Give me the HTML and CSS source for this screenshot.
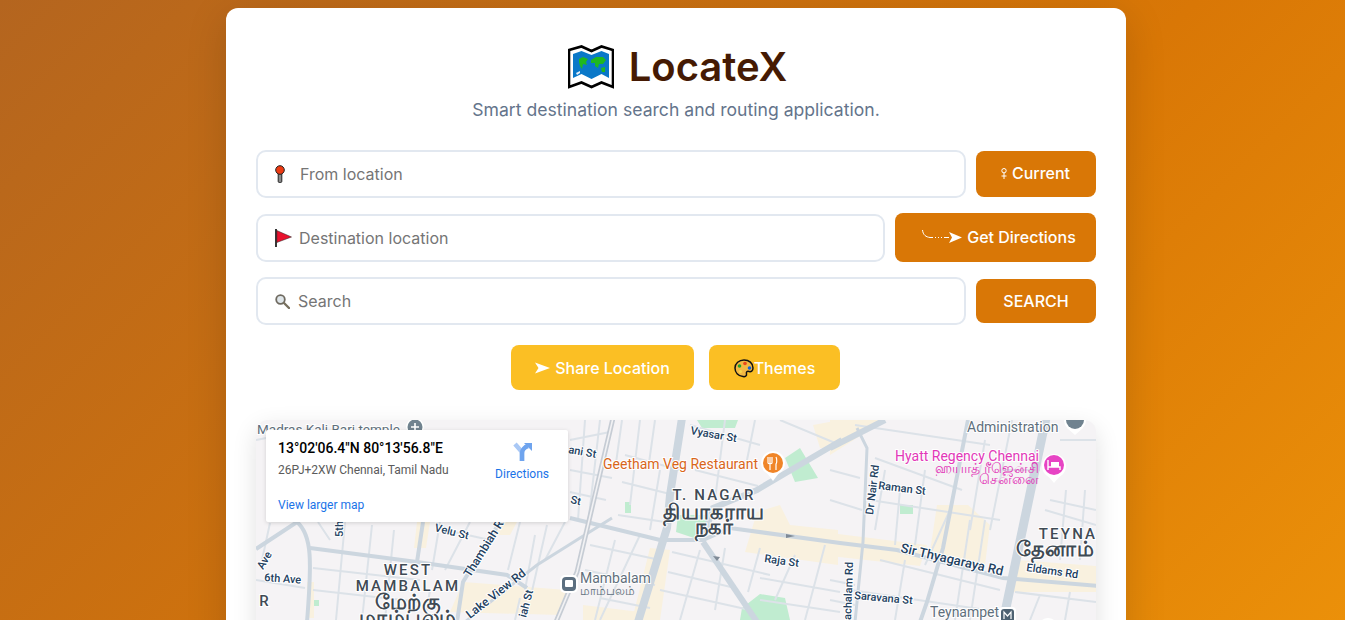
FILE: index.html
```html
<!DOCTYPE html>
<html lang="en">
<head>
    <meta charset="UTF-8">
    <meta name="viewport" content="width=device-width, initial-scale=1.0">
    <title>LocateX</title>
    <link rel="stylesheet" href="styles.css">
</head>
<body>
    <div class="container">
        <header class="header">
            <h1 class="title">
                <svg class="logo" viewBox="0 0 46 44" width="46" height="44">
                    <path d="M1 5 L13.5 1.5 L23.5 6 L33.5 1.5 L45 5 V42 L33.5 37.5 L23.5 42 L13.5 37.5 L1 42 Z" fill="#fff" stroke="#000" stroke-width="2.6"/>
                    <path d="M5 9 L13.5 6 L23.5 10 L33.5 6 L41 9 V33 L33.5 29 L23.5 34 L13.5 29 L5 33 Z" fill="#0a78c8"/>
                    <path d="M11 14 L15 12 L20 14 L18 17 L19 20 L15 19 L14 24 L12 21 L11 17 Z" fill="#1fb81f"/>
                    <path d="M23 15 L28 12 L35 12 L38 15 L35 19 L31 19 L30 23 L27 21 L27 18 L23 18 Z" fill="#1fb81f"/>
                    <path d="M33 23 L37 22 L37 27 L34 27 Z" fill="#1fb81f"/>
                    <path d="M8 28 L12 26 L12 28 L9 30 Z" fill="#e8f0f8"/>
                </svg>
                <span>LocateX</span>
            </h1>
            <p class="subtitle">Smart destination search and routing application.</p>
        </header>

        <div class="row">
            <label class="field">
                <svg class="field-icon" viewBox="0 0 12 18" width="12" height="18">
                    <rect x="4.2" y="6" width="3.6" height="11.4" rx="1" fill="#8a8a8a" stroke="#222"/>
                    <circle cx="6" cy="5" r="4.3" fill="#ee3a12" stroke="#222"/>
                </svg>
                <input class="field-input" type="text" placeholder="From location">
            </label>
            <button class="btn btn-small btn-current">
                <svg viewBox="0 0 8 11" width="8" height="11">
                    <circle cx="4" cy="2.7" r="2.2" fill="none" stroke="#fff"/>
                    <path d="M4 5 V11 M1.5 8 H6.5" stroke="#fff" fill="none"/>
                </svg>
                Current
            </button>
        </div>

        <div class="row">
            <label class="field field-flag">
                <svg class="field-icon" viewBox="0 0 18 18" width="18" height="18">
                    <path d="M2 0 V18" stroke="#222" stroke-width="1.8"/>
                    <path d="M2.8 1.5 L17.5 8 L2.8 13.5 Z" fill="#e8112d" stroke="#222" stroke-width=".5"/>
                </svg>
                <input class="field-input" type="text" placeholder="Destination location">
            </label>
            <button class="btn btn-wide">
                <svg viewBox="0 0 40 14" width="40" height="14">
                    <path d="M.5 0 C1 5 4 7 8 7.5 H27" fill="none" stroke="#fff"/>
                    <path d="M10 7.5 h2 m1 0 h2 m1 0 h2 m1 0 h2" stroke="#d97706" stroke-width="1.2" fill="none" transform="translate(1 0)"/>
                    <path d="M27 2 L40 7.5 L27 13 L30 7.5 Z" fill="#fff"/>
                </svg>
                Get Directions
            </button>
        </div>

        <div class="row">
            <label class="field field-search">
                <svg class="field-icon" viewBox="0 0 16 16" width="16" height="16">
                    <circle cx="6.5" cy="6.5" r="4.3" fill="#dfe6ea" stroke="#6f6a60" stroke-width="1.8"/>
                    <path d="M10 10 L15 15" stroke="#77705f" stroke-width="2.4" stroke-linecap="round"/>
                </svg>
                <input class="field-input" type="text" placeholder="Search">
            </label>
            <button class="btn btn-small btn-search">SEARCH</button>
        </div>

        <div class="actions">
            <button class="btn-alt btn-share">
                <svg viewBox="0 0 15 12" width="15" height="12">
                    <path d="M0 .5 L15 6 L0 11.5 L3.5 6 Z" fill="#fff"/>
                </svg>
                Share Location
            </button>
            <button class="btn-alt btn-themes">
                <svg class="palette" viewBox="0 0 20 20" width="20" height="20">
                    <path d="M10 2 C15 2 19 5 19 10 C19 13 17 14 15 13.5 C13 13 12 14 12.5 16 C13 18 11 19 9 18.5 C4 18 1 14.5 1 10 C1 5.5 5 2 10 2 Z" fill="#f3b843" stroke="#111" stroke-width="1.5"/>
                    <circle cx="5.5" cy="8" r="1.8" fill="#22a32a"/>
                    <circle cx="11" cy="5.5" r="1.8" fill="#e8471c"/>
                    <circle cx="15.5" cy="10" r="1.8" fill="#1463d8"/>
                    <circle cx="6.5" cy="13.5" r="1.6" fill="#f7d74a"/>
                </svg>Themes
            </button>
        </div>

        <div class="map">
            <svg class="map-canvas" viewBox="256 420 840 200" width="840" height="200">
                <!-- built up areas -->
                <g fill="#f9f1df">
                    <path d="M417 522 L430 522 L426 548 L414 548 Z"/>
                    <path d="M497 522 L517 522 L510 535 L490 535 Z"/>
                    <path d="M463 582 L567 590 L560 615 L450 612 Z"/>
                    <path d="M307 582 L314 582 L314 618 L307 618 Z"/>
                    <path d="M650 548 L670 550 L660 620 L632 620 Z"/>
                    <path d="M757 512 L780 505 L790 525 L838 530 L838 565 L745 552 Z"/>
                    <path d="M583 605 L640 612 L636 620 L583 620 Z"/>
                    <path d="M813 425 L840 420 L840 448 L820 448 Z"/>
                    <path d="M830 420 L885 420 L860 436 L830 455 Z"/>
                    <path d="M830 533 L927 545 L920 566 L830 556 Z"/>
                    <path d="M937 505 L968 505 L990 525 L985 565 L930 552 Z"/>
                    <path d="M1017 560 L1096 566 L1096 592 L1008 592 Z"/>
                </g>
                <!-- parks -->
                <g fill="#c0ecd0">
                    <path d="M697 420 L738 420 L735 428 L702 428 Z"/>
                    <path d="M785 458 L800 448 L818 478 L795 482 Z"/>
                    <path d="M678 515 L706 515 L712 530 L700 540 L676 532 Z"/>
                    <rect x="625" y="502" width="6" height="11"/>
                    <path d="M742 608 L760 594 L785 598 L790 620 L740 620 Z"/>
                    <rect x="900" y="505" width="13" height="9"/>
                    <rect x="314" y="600" width="5" height="6"/>
                </g>
                <!-- small streets -->
                <g fill="none" stroke="#dce2e8" stroke-width="2">
                    <path d="M256 440 L266 438 M270 523 L262 560 M318 522 L330 540 M345 522 L336 620 M372 525 L362 620 M394 530 L385 620"/>
                    <path d="M313 568 L420 580 M256 580 L305 588 M313 590 L420 602 M440 522 L432 570 M470 522 L445 570 M445 530 L490 540"/>
                    <path d="M430 590 L425 620 M520 522 L508 570 M535 535 L525 590 M547 525 L530 600 M565 522 L545 560 M520 598 L515 620"/>
                    <path d="M570 440 L610 432 M570 470 L612 478 M570 492 L606 500 M585 420 L578 520 M600 420 L588 525"/>
                    <path d="M622 420 L615 470 M640 420 L630 505 M655 420 L648 470 M625 455 L680 470 M622 482 L670 494 M618 515 L665 522"/>
                    <path d="M690 425 L760 445 M695 470 L758 486 M725 420 L715 500 M755 420 L745 470 M660 470 L650 530"/>
                    <path d="M640 535 L600 620 M590 545 L660 560 M585 570 L655 585 M600 598 L650 608 M615 540 L595 620"/>
                    <path d="M672 552 L770 575 M668 572 L735 588 M660 590 L750 610 M700 550 L680 620 M725 548 L715 610"/>
                    <path d="M760 548 L748 592 M760 578 L840 592 M795 555 L775 600 M825 545 L805 620 M760 600 L840 612"/>
                    <path d="M780 420 L840 445 M875 458 L962 490 M885 470 L875 530 M900 490 L895 545 M925 470 L915 545"/>
                    <path d="M870 500 L1000 520 M880 560 L1000 590 M850 590 L1000 612 M905 560 L895 620 M950 510 L925 565 M970 520 L955 620 M985 520 L970 620"/>
                    <path d="M985 440 L970 530 M1012 420 L990 530 M1000 470 L1040 470 M1060 440 L1096 440 M1050 500 L1096 510 M1066 490 L1060 560 M1085 490 L1080 560"/>
                    <path d="M1015 592 L1096 602 M1040 595 L1030 620 M1070 592 L1065 620 M855 425 L990 445 M1045 510 L1096 525"/>
                    <path d="M830 470 L860 478 M830 500 L862 510 M830 580 L855 585 M830 600 L855 605"/>
                </g>
                <!-- main roads -->
                <g fill="none" stroke="#ccd6df">
                    <path d="M682 418 L670 495 L667 528 L638 622" stroke-width="8"/>
                    <path d="M1046 418 L1003 622" stroke-width="9"/>
                    <path d="M570 518 L660 540 L703 540 L730 528 L840 543 L897 550 L1003 578 L1100 586" stroke-width="4"/>
                    <path d="M703 542 L757 622" stroke-width="6"/>
                    <path d="M842 440 L757 490 L713 508 L703 540" stroke-width="6"/>
                    <path d="M830 448 L885 420" stroke-width="6"/>
                    <path d="M968 420 L943 548 L927 602 L920 622" stroke-width="4"/>
                    <path d="M857 428 L867 448 L863 542 L855 622" stroke-width="3"/>
                    <path d="M256 549 L297 522 C312 535 312 560 307 622" stroke-width="4"/>
                    <path d="M310 548 L417 562 L507 575 L527 588" stroke-width="4"/>
                    <path d="M423 522 L417 562" stroke-width="4"/>
                    <path d="M500 522 L463 582 L457 622" stroke-width="4"/>
                    <path d="M465 622 L537 565 L580 538 L612 518" stroke-width="3"/>
                </g>
                <!-- railway -->
                <path d="M613 418 L577 572 L556 622" fill="none" stroke="#c6ccd4" stroke-width="5"/>
                <path d="M613 418 L577 572 L556 622" fill="none" stroke="#f2f2f4" stroke-width="1.6"/>

                <!-- pins -->
                <circle cx="773" cy="463" r="12" fill="#fff"/>
                <path d="M767 473 L773 481 L779 473 Z" fill="#fff"/>
                <circle cx="773" cy="463" r="10" fill="#f08528"/>
                <path d="M768 457 V463 C768 464 772 464 772 463 V457 M770 457 V470 M776 457 C777 459 777 463 776 464 V470" stroke="#fff" stroke-width="1.2" fill="none"/>
                <circle cx="1054" cy="466" r="12" fill="#fff"/>
                <path d="M1048 476 L1054 483 L1060 476 Z" fill="#fff"/>
                <circle cx="1054" cy="465" r="10" fill="#e744c4"/>
                <path d="M1048 460 V470 M1048 467 H1060 V470" stroke="#fff" stroke-width="1.4" fill="none"/>
                <rect x="1051" y="462" width="8" height="5" fill="#fff"/>
                <circle cx="415" cy="427" r="9" fill="#fff"/>
                <circle cx="415" cy="427" r="7.5" fill="#70828f"/>
                <path d="M411 427 H419 M415 423 V431" stroke="#fff" stroke-width="1.6"/>
                <circle cx="1075" cy="420" r="11" fill="#fff"/>
                <path d="M1067 428 L1075 435 L1083 428 Z" fill="#fff"/>
                <circle cx="1075" cy="420" r="9" fill="#70828f"/>
                <rect x="560" y="575" width="18" height="18" rx="5" fill="#fff"/>
                <rect x="562" y="577" width="14" height="14" rx="4" fill="#5c6f80"/>
                <rect x="565" y="580" width="8" height="7" rx="1" fill="#fff"/>
                <rect x="999" y="607" width="17" height="17" rx="4" fill="#fff"/>
                <rect x="1001" y="609" width="13" height="13" rx="3" fill="#4e6272"/>
                <path d="M1004 619 V612 L1007.5 616 L1011 612 V619" stroke="#fff" stroke-width="1.2" fill="none"/>
                <circle cx="1048" cy="628" r="10" fill="#fff"/>
                <circle cx="1048" cy="628" r="8" fill="#1e9e64"/>

                <!-- place names -->
                <g class="area">
                    <text x="408" y="575" text-anchor="middle">WEST</text>
                    <text x="408" y="591" text-anchor="middle">MAMBALAM</text>
                    <text x="714" y="500" text-anchor="middle">T. NAGAR</text>
                    <text x="1068" y="539" text-anchor="middle">TEYNA</text>
                    <text x="265" y="606" text-anchor="middle">R</text>
                </g>
                <g class="area-ta">
                    <text x="408" y="609" text-anchor="middle">மேற்கு</text>
                    <text x="408" y="625" text-anchor="middle">மாம்பலம்</text>
                    <text x="714" y="519" text-anchor="middle">தியாகராய</text>
                    <text x="714" y="534" text-anchor="middle">நகர்</text>
                    <text x="1055" y="556" text-anchor="middle">தேனாம்</text>
                </g>
                <text class="poi poi-food" x="603" y="469">Geetham Veg Restaurant</text>
                <text class="poi poi-hotel" x="1039" y="461" text-anchor="end">Hyatt Regency Chennai</text>
                <g class="poi-ta poi-hotel">
                    <text x="1039" y="473" text-anchor="end">ஹயாத் ரீஜென்சி</text>
                    <text x="1039" y="484" text-anchor="end">சென்னை</text>
                </g>
                <text class="poi poi-grey" x="967" y="432">Administration</text>
                <text class="poi poi-grey" x="580" y="583">Mambalam</text>
                <text class="poi-ta poi-grey" x="580" y="595">மாம்பலம்</text>
                <text class="poi poi-grey poi-temple" x="257" y="434">Madras Kali Bari temple</text>
                <text class="poi poi-grey" x="930" y="617">Teynampet</text>
                <g class="street">
                    <text transform="translate(690 434) rotate(10)">Vyasar St</text>
                    <text transform="translate(434 531) rotate(14)">Velu St</text>
                    <text transform="translate(764 562) rotate(8)">Raja St</text>
                    <text transform="translate(878 489) rotate(7)">Raman St</text>
                    <text class="street-big" transform="translate(900 552) rotate(13)">Sir Thyagaraya Rd</text>
                    <text transform="translate(1026 571) rotate(8)">Eldams Rd</text>
                    <text transform="translate(854 599) rotate(5)">Saravana St</text>
                    <text transform="translate(873 515) rotate(-83)">Dr Nair Rd</text>
                    <text transform="translate(851 620) rotate(-88)">achalam Rd</text>
                    <text class="street-mid" transform="translate(470 578) rotate(-58)">Thambiah Rd</text>
                    <text class="street-mid" transform="translate(470 619) rotate(-38)">Lake View Rd</text>
                    <text transform="translate(526 618) rotate(-75)">iah St</text>
                    <text transform="translate(343 537) rotate(-90)">5th</text>
                    <text transform="translate(263 570) rotate(-60)">Ave</text>
                    <text transform="translate(264 581) rotate(4)">6th Ave</text>
                    <text transform="translate(568 453) rotate(10)">ani St</text>
                    <text transform="translate(570 503) rotate(12)">St</text>
                </g>
                <g fill="#7f8a96">
                    <path d="M786 534 L795 536 L786 538 Z"/>
                    <path d="M713 556 L717 561 L720 557 Z"/>
                </g>
            </svg>

            <div class="info-card">
                <div class="info-text">
                    <div class="info-title">13°02'06.4"N 80°13'56.8"E</div>
                    <div class="info-address">26PJ+2XW Chennai, Tamil Nadu</div>
                    <a class="info-link" href="#">View larger map</a>
                </div>
                <a class="info-directions" href="#">
                    <svg viewBox="0 0 20 20" width="20" height="20">
                        <path d="M3 2 L10 10 V19" fill="none" stroke="#a9c8f5" stroke-width="4.5"/>
                        <path d="M10 19 V11 C10 8 13 5 16 4" fill="none" stroke="#6fa4ee" stroke-width="4.5"/>
                        <path d="M12 1 H20 V9 Z" fill="#6fa4ee"/>
                    </svg>
                    <span>Directions</span>
                </a>
            </div>
        </div>
    </div>
</body>
</html>
```

FILE: styles.css
```css
html {
    overflow: hidden;
}
body {
    height: 1050px;
    margin: 0;
    padding: 8px 0 0 7px;
    box-sizing: border-box;
    background: linear-gradient(135deg, #b4651f 0%, #d97706 50%, #f59e0b 100%);
    font-family: Inter, Arial, sans-serif;
    display: flex;
    justify-content: center;
    align-items: flex-start;
}
.container {
    width: 900px;
    box-sizing: border-box;
    padding: 30px;
    background-color: #fff;
    border-radius: 12px;
    box-shadow: 0 10px 40px rgba(0, 0, 0, 0.15);
    flex-shrink: 0;
}
.header {
    text-align: center;
    margin-bottom: 28px;
}
.title {
    margin: 0;
    padding-left: 3px;
    display: flex;
    justify-content: center;
    align-items: center;
    gap: 15px;
    font-size: 40px;
    font-weight: 600;
    line-height: 58px;
    color: #451a03;
}
.subtitle {
    margin: 2px 0 0;
    font-size: 17.6px;
    line-height: 24px;
    color: #64748b;
}
.row {
    display: flex;
    align-items: center;
    gap: 10px;
    margin-bottom: 15px;
}
.field {
    flex: 1;
    height: 48px;
    box-sizing: border-box;
    display: flex;
    align-items: center;
    gap: 14px;
    padding: 0 16px;
    border: 2px solid #e2e8f0;
    border-radius: 10px;
    background-color: #fff;
}
.field-flag {
    gap: 7px;
}
.field-search {
    gap: 8px;
}
.field-input {
    flex: 1;
    min-width: 0;
    padding: 0;
    border: 0;
    outline: 0;
    font-family: Inter, Arial, sans-serif;
    font-size: 16px;
    background: transparent;
}
.btn {
    height: 46px;
    padding: 0;
    border: 0;
    border-radius: 8px;
    background-color: #d97706;
    color: #fff;
    font-family: Inter, Arial, sans-serif;
    font-size: 16px;
    font-weight: 500;
    cursor: pointer;
    display: flex;
    align-items: center;
    justify-content: center;
    gap: 4px;
}
.btn-small {
    width: 120px;
}
.btn-current {
    padding: 0 2px 2px 0;
}
.btn-search {
    height: 44px;
}
.btn-wide {
    width: 201px;
    height: 49px;
    padding: 0 0 2px 7px;
    gap: 5px;
}
.actions {
    display: flex;
    justify-content: center;
    gap: 15px;
    margin: 20px 0 30px;
    padding-right: 1px;
}
.btn-alt {
    height: 45px;
    padding: 0;
    border: 0;
    border-radius: 8px;
    background-color: #fbbf24;
    color: #fff;
    font-family: Inter, Arial, sans-serif;
    font-size: 16px;
    font-weight: 500;
    cursor: pointer;
    display: flex;
    align-items: center;
    justify-content: center;
}
.btn-share {
    width: 183px;
    gap: 5px;
}
.btn-themes {
    width: 131px;
}
.map {
    position: relative;
    height: 450px;
    border-radius: 12px;
    background-color: #f5f3f5;
    box-shadow: 0 8px 24px rgba(0, 0, 0, 0.12);
    overflow: hidden;
}
.map-canvas {
    display: block;
}
.info-card {
    position: absolute;
    top: 10px;
    left: 10px;
    width: 302px;
    height: 92px;
    box-sizing: border-box;
    padding: 9px 12px;
    display: flex;
    justify-content: space-between;
    background-color: #fff;
    border-radius: 2px;
    box-shadow: 0 1px 4px rgba(0, 0, 0, 0.15);
    font-family: Roboto, Arial, sans-serif;
}
.info-title {
    font-size: 14px;
    font-weight: 500;
    line-height: 18px;
    color: #000;
}
.info-address {
    margin-top: 5px;
    font-size: 12px;
    line-height: 16px;
    color: #5b5b5b;
}
.info-link {
    display: block;
    margin-top: 19px;
    font-size: 12px;
    line-height: 16px;
    color: #1a73e8;
    text-decoration: none;
}
.info-directions {
    display: flex;
    flex-direction: column;
    align-items: center;
    gap: 4px;
    margin-top: 3px;
    margin-right: 7px;
    font-size: 12px;
    line-height: 16px;
    color: #1a73e8;
    text-decoration: none;
}
.area text {
    font: 500 15px Roboto, Arial, sans-serif;
    letter-spacing: 2.2px;
    fill: #3f4a54;
    stroke: #fff;
    stroke-width: 2px;
    paint-order: stroke;
}
.area-ta text {
    font: 700 21px "Noto Sans", Roboto, sans-serif;
    letter-spacing: .5px;
    fill: #3f4a54;
    stroke: #fff;
    stroke-width: 2px;
    paint-order: stroke;
}
.poi {
    font: 400 14px Roboto, Arial, sans-serif;
    stroke: #fff;
    stroke-width: 2px;
    paint-order: stroke;
}
.poi-temple {
    font-size: 13.5px;
}
.poi-ta text {
    font: 400 13.5px "Noto Sans", Roboto, sans-serif;
}
text.poi-ta {
    font: 400 12px "Noto Sans", Roboto, sans-serif;
}
.poi-food {
    fill: #d9661a;
}
.poi-hotel {
    fill: #e238b8;
}
.poi-grey {
    fill: #5f6f7c;
}
.street text {
    font: 500 11px Roboto, Arial, sans-serif;
    fill: #23415f;
    stroke: #fff;
    stroke-width: 2px;
    paint-order: stroke;
}
.street .street-big {
    font-size: 13px;
}
.street .street-mid {
    font-size: 12px;
}
```
